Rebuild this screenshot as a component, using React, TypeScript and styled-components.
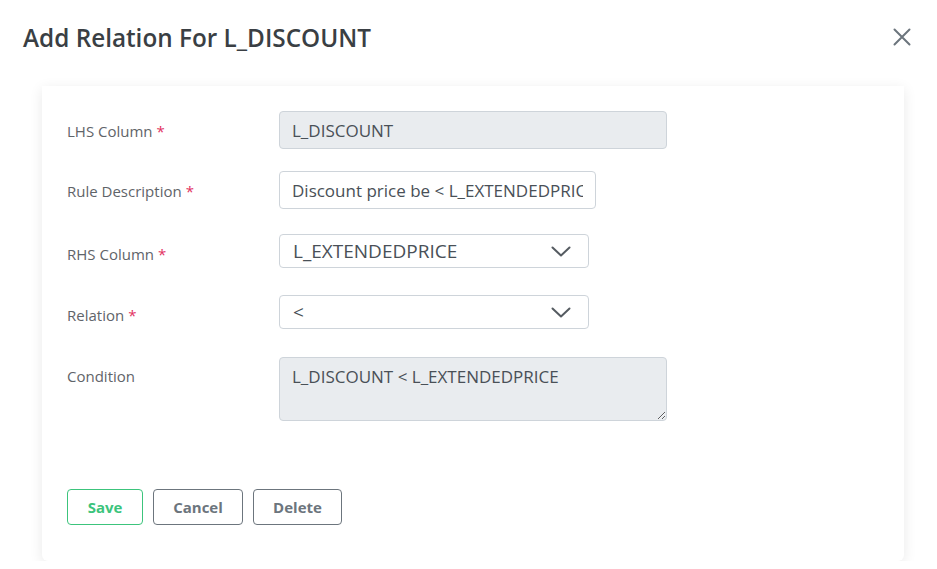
import styled, { createGlobalStyle } from "styled-components";

const GlobalStyle = createGlobalStyle`
  * { box-sizing: border-box; }
  body {
    margin: 0;
    background: #fff;
    font-family: "Open Sans", "Noto Sans", sans-serif;
  }
`

const Header = styled.div`
  height: 74px;
  display: flex;
  align-items: center;
  justify-content: space-between;
  padding: 0 26px 0 23px;
`
const Title = styled.h2`
  margin: 0;
  font-size: 24.3px;
  font-weight: 600;
  color: #3a3f44;
`
const CloseButton = styled.button`
  border: none;
  background: none;
  padding: 0;
  display: flex;
  color: #6c757d;
  cursor: pointer;
`
const CardWrap = styled.div`
  padding: 12px 33px 0 42px;
`
const Card = styled.div`
  width: 862px;
  height: 475px;
  background: #fff;
  border-radius: 0 0 6px 6px;
  box-shadow: 0 3px 14px rgba(0, 0, 0, 0.09);
  padding: 25px 25px 36px;
  display: flex;
  flex-direction: column;
`
const Row = styled.div<{ $top: number; $start?: boolean }>`
  display: flex;
  align-items: ${p => (p.$start ? "flex-start" : "center")};
  margin-top: ${p => p.$top}px;
`
const Label = styled.label<{ $pad?: number }>`
  width: 212px;
  flex-shrink: 0;
  font-size: 15px;
  color: #5f6469;
  padding-top: ${p => p.$pad ?? 2}px;
  & span {
    color: #e2315f;
    margin-left: 4px;
  }
`
const TextInput = styled.input<{ $w: number; $disabled?: boolean }>`
  width: ${p => p.$w}px;
  height: 38px;
  border: 1px solid #ced4da;
  border-radius: 4px;
  padding: 0 12px;
  font-family: inherit;
  font-size: 17px;
  color: #495057;
  background: ${p => (p.$disabled ? "#e9ecef" : "#fff")};
  outline: none;
`
const SelectBox = styled.div`
  position: relative;
  width: 310px;
  height: 34px;
  & svg {
    position: absolute;
    right: 18px;
    top: 12px;
    pointer-events: none;
    color: #555b61;
  }
`
const Select = styled.select`
  appearance: none;
  width: 100%;
  height: 100%;
  border: 1px solid #ced4da;
  border-radius: 4px;
  padding: 0 13px;
  font-family: inherit;
  font-size: 19px;
  color: #495057;
  background: #fff;
  outline: none;
`
const TextArea = styled.textarea`
  width: 388px;
  height: 64px;
  border: 1px solid #ced4da;
  border-radius: 4px;
  padding: 7px 12px;
  font-family: inherit;
  font-size: 17px;
  color: #495057;
  background: #e9ecef;
  outline: none;
  resize: vertical;
  display: block;
`
const Actions = styled.div`
  margin-top: auto;
  display: flex;
  gap: 10px;
`
const Button = styled.button<{ $w: number; $primary?: boolean }>`
  width: ${p => p.$w}px;
  height: 36px;
  border-radius: 4px;
  background: #fff;
  font-family: inherit;
  font-size: 15px;
  font-weight: 700;
  cursor: pointer;
  border: 1px solid ${p => (p.$primary ? "#3cc47c" : "#6c757d")};
  color: ${p => (p.$primary ? "#3cc47c" : "#6c757d")};
`

const Chevron = () => (
  <svg width="20" height="11" viewBox="0 0 20 11" fill="none">
    <polyline points="1.5,1.5 10,9.5 18.5,1.5" stroke="currentColor" strokeWidth="2" strokeLinecap="round" strokeLinejoin="round" />
  </svg>
)

const CloseIcon = () => (
  <svg width="18" height="18" viewBox="0 0 18 18" fill="none">
    <path d="M1.5 1.5 L16.5 16.5 M16.5 1.5 L1.5 16.5" stroke="currentColor" strokeWidth="2" strokeLinecap="round" />
  </svg>
)

export default function App() {
  return (
    <>
      <GlobalStyle />
      <Header>
        <Title>Add Relation For L_DISCOUNT</Title>
        <CloseButton aria-label="Close">
          <CloseIcon />
        </CloseButton>
      </Header>
      <CardWrap>
        <Card>
          <Row $top={0}>
            <Label>LHS Column<span>*</span></Label>
            <TextInput $w={388} $disabled readOnly value="L_DISCOUNT" />
          </Row>
          <Row $top={22}>
            <Label>Rule Description<span>*</span></Label>
            <TextInput $w={317} readOnly value="Discount price be < L_EXTENDEDPRICE" />
          </Row>
          <Row $top={25}>
            <Label $pad={5}>RHS Column<span>*</span></Label>
            <SelectBox>
              <Select defaultValue="L_EXTENDEDPRICE">
                <option>L_EXTENDEDPRICE</option>
              </Select>
              <Chevron />
            </SelectBox>
          </Row>
          <Row $top={27}>
            <Label $pad={5}>Relation<span>*</span></Label>
            <SelectBox>
              <Select defaultValue="<">
                <option>{"<"}</option>
              </Select>
              <Chevron />
            </SelectBox>
          </Row>
          <Row $top={28} $start>
            <Label $pad={9}>Condition</Label>
            <TextArea readOnly value="L_DISCOUNT < L_EXTENDEDPRICE" />
          </Row>
          <Actions>
            <Button $w={76} $primary>Save</Button>
            <Button $w={90}>Cancel</Button>
            <Button $w={89}>Delete</Button>
          </Actions>
        </Card>
      </CardWrap>
    </>
  )
}
